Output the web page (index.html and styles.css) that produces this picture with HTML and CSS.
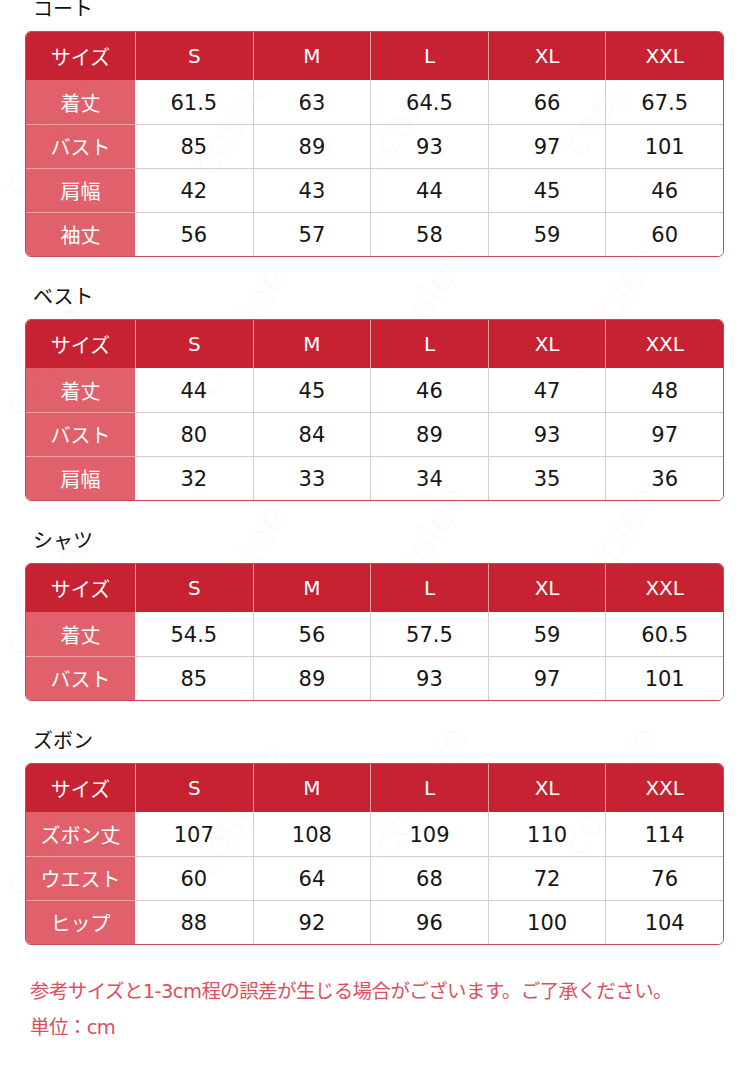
FILE: index.html
```html
<!DOCTYPE html>
<html lang="ja">
<head>
<meta charset="utf-8">
<title>サイズ表</title>
<link rel="stylesheet" href="styles.css">
</head>
<body>
<div class="page">
  <section class="section first">
    <h2 class="title">コート</h2>
    <div class="chart">
      <table>
        <colgroup><col class="c0"><col><col><col><col><col></colgroup>
        <thead><tr><th>サイズ</th><th>S</th><th>M</th><th>L</th><th>XL</th><th>XXL</th></tr></thead>
        <tbody>
          <tr><th>着丈</th><td>61.5</td><td>63</td><td>64.5</td><td>66</td><td>67.5</td></tr>
          <tr><th>バスト</th><td>85</td><td>89</td><td>93</td><td>97</td><td>101</td></tr>
          <tr><th>肩幅</th><td>42</td><td>43</td><td>44</td><td>45</td><td>46</td></tr>
          <tr><th>袖丈</th><td>56</td><td>57</td><td>58</td><td>59</td><td>60</td></tr>
        </tbody>
      </table>
    </div>
  </section>

  <section class="section">
    <h2 class="title">ベスト</h2>
    <div class="chart">
      <table>
        <colgroup><col class="c0"><col><col><col><col><col></colgroup>
        <thead><tr><th>サイズ</th><th>S</th><th>M</th><th>L</th><th>XL</th><th>XXL</th></tr></thead>
        <tbody>
          <tr><th>着丈</th><td>44</td><td>45</td><td>46</td><td>47</td><td>48</td></tr>
          <tr><th>バスト</th><td>80</td><td>84</td><td>89</td><td>93</td><td>97</td></tr>
          <tr><th>肩幅</th><td>32</td><td>33</td><td>34</td><td>35</td><td>36</td></tr>
        </tbody>
      </table>
    </div>
  </section>

  <section class="section">
    <h2 class="title">シャツ</h2>
    <div class="chart">
      <table>
        <colgroup><col class="c0"><col><col><col><col><col></colgroup>
        <thead><tr><th>サイズ</th><th>S</th><th>M</th><th>L</th><th>XL</th><th>XXL</th></tr></thead>
        <tbody>
          <tr><th>着丈</th><td>54.5</td><td>56</td><td>57.5</td><td>59</td><td>60.5</td></tr>
          <tr><th>バスト</th><td>85</td><td>89</td><td>93</td><td>97</td><td>101</td></tr>
        </tbody>
      </table>
    </div>
  </section>

  <section class="section">
    <h2 class="title">ズボン</h2>
    <div class="chart">
      <table>
        <colgroup><col class="c0"><col><col><col><col><col></colgroup>
        <thead><tr><th>サイズ</th><th>S</th><th>M</th><th>L</th><th>XL</th><th>XXL</th></tr></thead>
        <tbody>
          <tr><th>ズボン丈</th><td>107</td><td>108</td><td>109</td><td>110</td><td>114</td></tr>
          <tr><th>ウエスト</th><td>60</td><td>64</td><td>68</td><td>72</td><td>76</td></tr>
          <tr><th>ヒップ</th><td>88</td><td>92</td><td>96</td><td>100</td><td>104</td></tr>
        </tbody>
      </table>
    </div>
  </section>

  <div class="notes">
    <p>参考サイズと1-3cm程の誤差が生じる場合がございます。ご了承ください。</p>
    <p>単位：cm</p>
  </div>

  <div class="watermark" aria-hidden="true">
    <span class="wm w1">cosplee</span><span class="wm w2">cosplee</span><span class="wm w3">cosplee</span><span class="wm w4">cosplee</span>
    <span class="wm w5">cosplee</span><span class="wm w6">cosplee</span><span class="wm w7">cosplee</span><span class="wm w8">cosplee</span>
    <span class="wm w9">cosplee</span><span class="wm w10">cosplee</span><span class="wm w11">cosplee</span><span class="wm w12">cosplee</span>
    <span class="wm w13">cosplee</span><span class="wm w14">cosplee</span><span class="wm w15">cosplee</span><span class="wm w16">cosplee</span>
  </div>
</div>
</body>
</html>
```

FILE: styles.css
```css
* { box-sizing: border-box; }
html, body { margin: 0; padding: 0; background: #fff; }
body {
  font-family: "DejaVu Sans", "Noto Sans CJK JP", sans-serif;
  color: #151515;
  overflow: hidden;
}
.page {
  position: relative;
  width: 750px;
  height: 1069px;
  padding: 0 26px 0 25px;
  overflow: hidden;
}
.section { margin-top: 18px; }
.section.first { margin-top: -13px; }
.title {
  margin: 0;
  height: 44px;
  line-height: 44px;
  padding-left: 8px;
  font-size: 20px;
  font-weight: normal;
  color: #111;
}
.chart {
  border: 1px solid #c24a57;
  border-radius: 6px;
  overflow: hidden;
}
table {
  width: 100%;
  border-collapse: separate;
  border-spacing: 0;
  table-layout: fixed;
}
col.c0 { width: 109px; }
th, td {
  padding: 0;
  text-align: center;
  vertical-align: middle;
  font-weight: normal;
  font-size: 21px;
}
thead th {
  height: 48px;
  background: #c62232;
  color: #fff;
  font-size: 20px;
  border-left: 1px solid #e9a2aa;
}
thead th:first-child { border-left: none; }
tbody th {
  height: 44px;
  background: #e0606b;
  color: #fff;
  font-size: 20px;
  border-top: 1px solid #eea0a7;
}
tbody tr:first-child th { border-top: none; }
tbody td {
  height: 44px;
  background: #fff;
  border-top: 1px solid #dccbcd;
  border-left: 1px solid #dccbcd;
  padding-top: 1px;
}
tbody tr:first-child td { border-top: none; }
tbody tr td:nth-child(2) { border-left: none; }
.notes {
  margin-top: 32px;
  padding-left: 5px;
  color: #d9505e;
  font-size: 19.5px;
}
.notes p {
  margin: 0;
  height: 36px;
  line-height: 30px;
  letter-spacing: -0.6px;
}
.watermark {
  position: absolute;
  inset: 0;
  pointer-events: none;
}
.wm {
  position: absolute;
  font-family: "DejaVu Sans", sans-serif;
  font-size: 38px;
  color: rgba(226, 70, 95, 0.035);
  transform: rotate(-58deg);
  transform-origin: left bottom;
  white-space: nowrap;
}
.w1 { left: 30px; top: 160px; }
.w2 { left: 220px; top: 140px; }
.w3 { left: 400px; top: 120px; }
.w4 { left: 590px; top: 120px; }
.w5 { left: 30px; top: 380px; }
.w6 { left: 220px; top: 360px; }
.w7 { left: 400px; top: 340px; }
.w8 { left: 590px; top: 340px; }
.w9 { left: 30px; top: 620px; }
.w10 { left: 220px; top: 600px; }
.w11 { left: 400px; top: 580px; }
.w12 { left: 590px; top: 580px; }
.w13 { left: 30px; top: 860px; }
.w14 { left: 220px; top: 840px; }
.w15 { left: 400px; top: 820px; }
.w16 { left: 590px; top: 820px; }
```
